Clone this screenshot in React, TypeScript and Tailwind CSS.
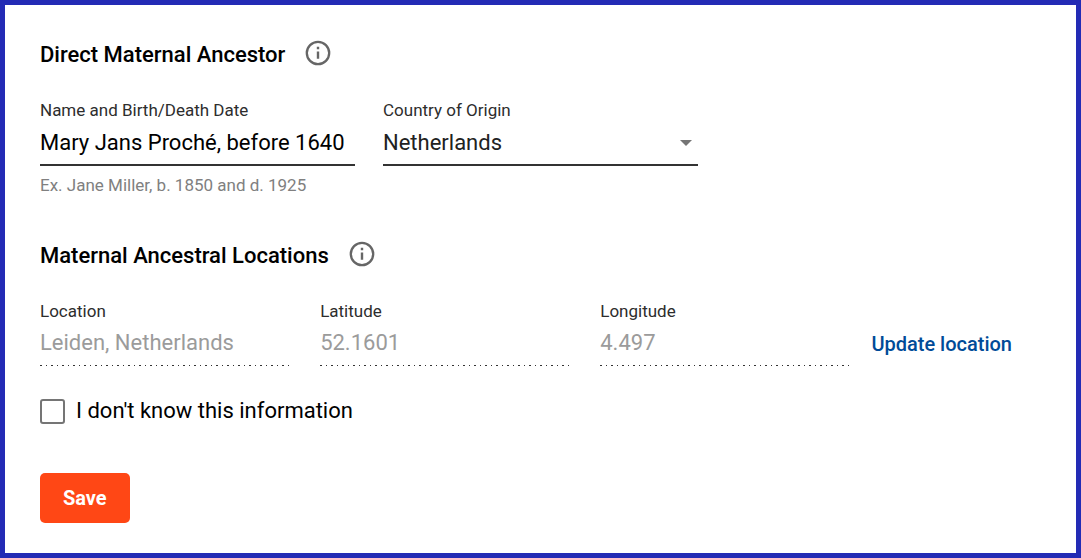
import { useState } from 'react';

function InfoButton({ label }: { label: string }) {
  return (
    <button type="button" aria-label={label} className="mb-1 size-7 shrink-0 text-[#666666]">
      <svg viewBox="0 0 28 28" className="size-7" fill="none" aria-hidden="true">
        <circle cx="14" cy="14" r="11.2" stroke="currentColor" strokeWidth="2.3" />
        <path d="M12.8 7.8h2.4v2.4h-2.4zM12.8 12.4h2.4v7.4h-2.4z" fill="currentColor" />
      </svg>
    </button>
  );
}

function SectionHeading({ title }: { title: string }) {
  return (
    <div className="flex h-8 items-center gap-[19px]">
      <h2 className="text-[22px] leading-8 font-medium text-black">{title}</h2>
      <InfoButton label={`About ${title}`} />
    </div>
  );
}

function LocationField({ id, label, value }: { id: string; label: string; value: string }) {
  return (
    <div className="flex min-w-0 flex-col">
      <label htmlFor={id} className="mb-0.5 text-[17px] leading-[18px] text-[#2d2d2d]">{label}</label>
      <input
        id={id}
        disabled
        value={value}
        readOnly
        className="h-10 w-full min-w-0 bg-transparent text-[22px] leading-8 text-[#9b9b9b]"
      />
      <div className="mt-[3px] h-px bg-[repeating-linear-gradient(90deg,#333_0_2px,transparent_2px_6px,#333_6px_7px,transparent_7px_11px)]" />
    </div>
  );
}

export default function App() {
  const [name, setName] = useState('Mary Jans Proché, before 1640');
  const [country, setCountry] = useState('Netherlands');
  const [unknown, setUnknown] = useState(false);

  return (
    <form
      onSubmit={(event) => event.preventDefault()}
      className="min-h-screen border-5 border-[#232bb5] bg-white pt-[34px] pr-16 pb-[30px] pl-[35px] font-[Roboto,sans-serif]"
    >
      <section>
        <SectionHeading title="Direct Maternal Ancestor" />
        <div className="mt-[30px] grid max-w-[658px] grid-cols-2 gap-7">
          <div className="flex min-w-0 flex-col">
            <label htmlFor="ancestor" className="mb-0.5 text-[17px] leading-[18px] text-[#2d2d2d]">
              Name and Birth/Death Date
            </label>
            <input
              id="ancestor"
              value={name}
              onChange={(event) => setName(event.target.value)}
              aria-describedby="ancestor-hint"
              className="h-[45px] w-full min-w-0 border-b-2 border-[#333333] text-[22px] leading-8 text-black outline-none"
            />
            <p id="ancestor-hint" className="mt-2.5 mb-0.5 text-[17px] leading-[18px] text-[#808080]">
              Ex. Jane Miller, b. 1850 and d. 1925
            </p>
          </div>
          <div className="flex min-w-0 flex-col">
            <label htmlFor="country" className="mb-0.5 text-[17px] leading-[18px] text-[#2d2d2d]">
              Country of Origin
            </label>
            <div className="relative">
              <select
                id="country"
                value={country}
                onChange={(event) => setCountry(event.target.value)}
                className="block h-[45px] w-full appearance-none border-b-2 border-[#333333] pr-8 text-[22px] leading-8 text-[#212121] outline-none"
              >
                <option>Netherlands</option>
              </select>
              <svg
                viewBox="0 0 12 6"
                aria-hidden="true"
                className="pointer-events-none absolute top-[19px] right-1.5 h-1.5 w-3 text-[#757575]"
              >
                <path d="M0 0h12L6 6z" fill="currentColor" />
              </svg>
            </div>
          </div>
        </div>
      </section>

      <section className="mt-11">
        <SectionHeading title="Maternal Ancestral Locations" />
        <div className="mt-[30px] flex items-center gap-[22px]">
          <div className="grid flex-1 grid-cols-3 gap-[31px]">
            <LocationField id="location" label="Location" value="Leiden, Netherlands" />
            <LocationField id="latitude" label="Latitude" value="52.1601" />
            <LocationField id="longitude" label="Longitude" value="4.497" />
          </div>
          <button type="button" className="mt-5 text-xl leading-6 font-medium text-[#004b98]">
            Update location
          </button>
        </div>
      </section>

      <label className="mt-[29px] flex h-8 w-fit items-center gap-[11px] text-[22px] leading-8 text-black">
        <input
          type="checkbox"
          checked={unknown}
          onChange={(event) => setUnknown(event.target.checked)}
          className="size-[25px] appearance-none rounded-[3px] border-2 border-[#757575] checked:bg-[#757575]"
        />
        I don't know this information
      </label>

      <button
        type="submit"
        className="mt-[46px] block h-[50px] rounded-[5px] bg-[#ff4715] px-[23px] text-xl leading-6 font-bold text-white"
      >
        Save
      </button>
    </form>
  );
}
